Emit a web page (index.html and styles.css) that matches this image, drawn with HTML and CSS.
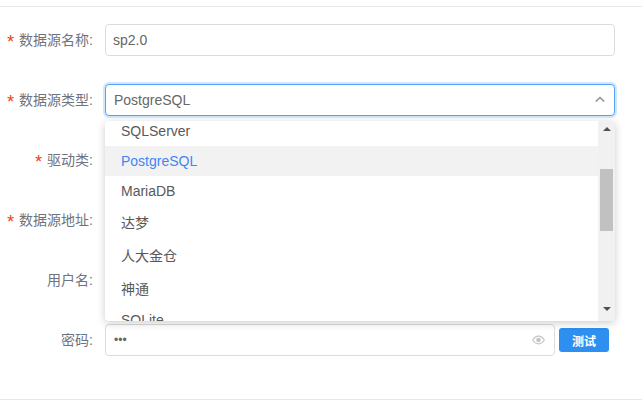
FILE: index.html
```html
<!DOCTYPE html>
<html lang="zh-CN">
<head>
    <meta charset="UTF-8">
    <meta name="viewport" content="width=device-width, initial-scale=1.0">
    <title>数据源</title>
    <link rel="stylesheet" href="styles.css">
</head>
<body>

<form class="form-body">
    <div class="form-row">
        <label class="form-label"><span class="required">*</span>数据源名称:</label>
        <div class="field"><input class="field-input" type="text" value="sp2.0"></div>
    </div>

    <div class="form-row select-row">
        <label class="form-label"><span class="required">*</span>数据源类型:</label>
        <div class="field field-focus">
            <span class="field-text">PostgreSQL</span>
            <svg class="chevron" width="12" height="12" viewBox="0 0 12 12"><path d="M1.8 7.6 L6 3.5 L10.2 7.6" fill="none" stroke="#8c8c98" stroke-width="1.4"/></svg>
        </div>

        <!-- 下拉列表 -->
        <div class="dropdown">
            <ul class="option-list">
                <li class="option">SQLServer</li>
                <li class="option option-active">PostgreSQL</li>
                <li class="option">MariaDB</li>
                <li class="option option-cjk">达梦</li>
                <li class="option option-cjk">人大金仓</li>
                <li class="option option-cjk">神通</li>
                <li class="option">SQLite</li>
            </ul>
            <div class="scrollbar">
                <span class="arrow-up"></span>
                <span class="thumb"></span>
                <span class="arrow-down"></span>
            </div>
        </div>
    </div>

    <div class="form-row">
        <label class="form-label"><span class="required">*</span>驱动类:</label>
        <div class="field"></div>
    </div>

    <div class="form-row">
        <label class="form-label"><span class="required">*</span>数据源地址:</label>
        <div class="field"></div>
    </div>

    <div class="form-row">
        <label class="form-label">用户名:</label>
        <div class="field"></div>
    </div>

    <div class="form-row">
        <label class="form-label">密码:</label>
        <div class="field field-short">
            <span class="field-text password-dots">•••</span>
            <svg class="eye" width="13" height="12" viewBox="0 0 13 12"><path d="M0.7 6 C2.6 2.9 4.6 2.2 6.5 2.2 C8.4 2.2 10.4 2.9 12.3 6 C10.4 9.1 8.4 9.8 6.5 9.8 C4.6 9.8 2.6 9.1 0.7 6 Z" fill="none" stroke="#c4c4c8" stroke-width="1.2"/><circle cx="6.5" cy="6" r="2.3" fill="#c4c4c8"/></svg>
        </div>
        <button class="test-btn" type="button">测试</button>
    </div>
</form>

</body>
</html>
```

FILE: styles.css
```css
* {
    box-sizing: border-box;
}
body {
    margin: 0;
    background-color: #fff;
    font-family: "Liberation Sans", "Noto Sans CJK SC", sans-serif;
    font-size: 14px;
    color: #595959;
}
.form-body {
    margin-top: 6px;
    padding: 17px 0 43px;
    border-top: 1px solid #e8e8e8;
    border-bottom: 1px solid #e8e8e8;
}
.form-row {
    display: flex;
    align-items: center;
    height: 32px;
    margin-bottom: 28px;
    padding-right: 27px;
}
.form-row:last-child {
    margin-bottom: 0;
}
.select-row {
    position: relative;
}
.form-label {
    flex: none;
    width: 93px;
    margin-right: 12px;
    line-height: 20px;
    text-align: right;
    color: #6f737e;
    white-space: nowrap;
}
.required {
    margin-right: 3px;
    color: #ee3d12;
    font-family: "Liberation Mono", monospace;
    font-size: 18px;
    line-height: 0;
    vertical-align: -3px;
}
.field {
    flex: 1;
    display: flex;
    align-items: center;
    height: 32px;
    padding: 0 8px;
    background-color: #fff;
    border: 1px solid #dcdcdc;
    border-radius: 4px;
}
.field-focus {
    border-color: #55a2f5;
    box-shadow: 0 0 0 2px rgba(24, 144, 255, 0.2);
}
.field-short {
    flex: none;
    width: 450px;
}
.field-input {
    width: 100%;
    margin-left: -1px;
    padding: 0;
    border: 0;
    outline: 0;
    font: inherit;
    color: #666;
}
.field-text {
    flex: 1;
    color: #666;
}
.password-dots {
    font-size: 12px;
}
.chevron {
    flex: none;
}
.eye {
    flex: none;
    margin-right: 1px;
}
.test-btn {
    flex: none;
    width: 50px;
    height: 24px;
    margin-left: 4px;
    margin-right: 6px;
    padding: 0;
    background-color: #2d8ff0;
    border: 0;
    border-radius: 3px;
    color: #fff;
    font-family: inherit;
    font-size: 12px;
    font-weight: 700;
}

/* dropdown */
.dropdown {
    position: absolute;
    top: 37px;
    left: 105px;
    z-index: 10;
    display: flex;
    width: 510px;
    height: 200px;
    overflow: hidden;
    background-color: #fff;
    border-radius: 4px;
    box-shadow: 0 2px 8px rgba(0, 0, 0, 0.2);
}
.option-list {
    flex: 1;
    margin: -5px 0 0;
    padding: 0;
    list-style: none;
}
.option {
    height: 30px;
    padding: 0 16px;
    line-height: 30px;
}
.option-cjk {
    height: 33px;
    line-height: 34px;
}
.option-active {
    background-color: #f2f2f2;
    color: #3f86f5;
}
.scrollbar {
    flex: none;
    display: flex;
    flex-direction: column;
    align-items: center;
    width: 17px;
    background-color: #f1f1f1;
}
.arrow-up,
.arrow-down {
    width: 0;
    height: 0;
    border-left: 4px solid transparent;
    border-right: 4px solid transparent;
}
.arrow-up {
    margin-top: 6px;
    border-bottom: 4px solid #505050;
}
.arrow-down {
    margin-top: 76px;
    border-top: 4px solid #505050;
}
.thumb {
    width: 13px;
    height: 62px;
    margin-top: 38px;
    background-color: #c1c1c1;
}
```
